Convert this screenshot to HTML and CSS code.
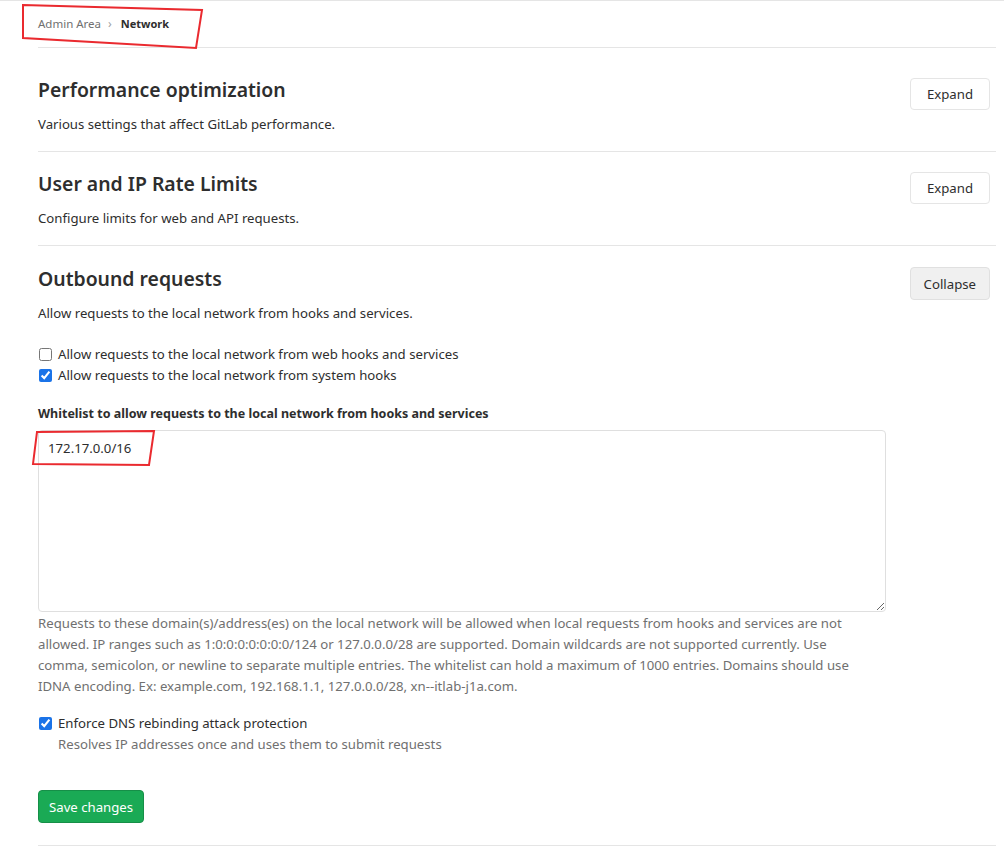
FILE: index.html
```html
<!DOCTYPE html>
<html lang="en">
<head>
<meta charset="utf-8">
<title>Network · Admin Area</title>
<link rel="stylesheet" href="styles.css">
</head>
<body>
<div class="topbar"></div>
<div class="page">
  <div class="breadcrumbs">
    <span class="crumb">Admin Area</span>
    <span class="sep">›</span>
    <span class="crumb current">Network</span>
  </div>

  <section class="settings first">
    <div class="settings-header">
      <div>
        <h4 class="settings-title">Performance optimization</h4>
        <p class="settings-desc">Various settings that affect GitLab performance.</p>
      </div>
      <button class="btn">Expand</button>
    </div>
  </section>

  <section class="settings">
    <div class="settings-header">
      <div>
        <h4 class="settings-title">User and IP Rate Limits</h4>
        <p class="settings-desc">Configure limits for web and API requests.</p>
      </div>
      <button class="btn">Expand</button>
    </div>
  </section>

  <section class="settings expanded">
    <div class="settings-header">
      <div>
        <h4 class="settings-title">Outbound requests</h4>
        <p class="settings-desc">Allow requests to the local network from hooks and services.</p>
      </div>
      <button class="btn btn-active">Collapse</button>
    </div>

    <form class="settings-form">
      <div class="checks">
        <label class="check"><input type="checkbox"> Allow requests to the local network from web hooks and services</label>
        <label class="check"><input type="checkbox" checked> Allow requests to the local network from system hooks</label>
      </div>

      <div class="field">
        <label class="field-label">Whitelist to allow requests to the local network from hooks and services</label>
        <textarea class="textarea">172.17.0.0/16</textarea>
        <p class="help">Requests to these domain(s)/address(es) on the local network will be allowed when local requests from hooks and services are not allowed. IP ranges such as 1:0:0:0:0:0:0:0/124 or 127.0.0.0/28 are supported. Domain wildcards are not supported currently. Use comma, semicolon, or newline to separate multiple entries. The whitelist can hold a maximum of 1000 entries. Domains should use IDNA encoding. Ex: example.com, 192.168.1.1, 127.0.0.0/28, xn--itlab-j1a.com.</p>
      </div>

      <div class="dns">
        <label class="check"><input type="checkbox" checked> Enforce DNS rebinding attack protection</label>
        <div class="check-help">Resolves IP addresses once and uses them to submit requests</div>
      </div>

      <button type="button" class="btn btn-success">Save changes</button>
    </form>
  </section>
</div>

<svg class="mark mark-crumb" width="190" height="50" viewBox="0 0 190 50"><polygon points="3,2 182,7 176,45 3,35" /></svg>
<svg class="mark mark-ip" width="130" height="40" viewBox="0 0 130 40"><polygon points="7,3 124,2 119,36 3,35" /></svg>
</body>
</html>
```

FILE: styles.css
```css
* { box-sizing: border-box; }
html, body { margin: 0; padding: 0; background: #fff; }
body {
  font-family: "Noto Sans", "Open Sans", "DejaVu Sans", sans-serif;
  font-size: 13.2px;
  color: #2e2e2e;
  position: relative;
}
.topbar { height: 1px; background: #e5e5e5; }
.page { margin: 0 8px 0 38px; }

.breadcrumbs {
  height: 47px;
  border-bottom: 1px solid #e5e5e5;
  display: flex;
  align-items: center;
  font-size: 11.5px;
  padding-bottom: 2px;
}
.crumb { color: #707070; }
.crumb.current { color: #2e2e2e; font-weight: 700; font-size: 11px; }
.sep { color: #a0a0a0; margin: 0 9px 0 7px; font-size: 12px; }

.settings {
  border-bottom: 1px solid #e5e5e5;
  padding: 20px 0 17px;
}
.settings.first { padding-top: 30px; }
.settings.expanded { padding-top: 21px; padding-bottom: 22px; }
.settings-header {
  display: flex;
  justify-content: space-between;
  align-items: flex-start;
  padding-right: 6px;
}
.settings-title {
  margin: 0;
  font-size: 19.4px;
  line-height: 24px;
  font-weight: 600;
}
.settings-desc { margin: 12px 0 0; line-height: 20px; }

.btn {
  font: inherit;
  font-size: 13.2px;
  color: #2e2e2e;
  background: #fff;
  border: 1px solid #e5e5e5;
  border-radius: 4px;
  height: 32px;
  padding: 0 16px;
  margin-top: 0;
  cursor: pointer;
}
.btn-active { background: #f0f0f0; border-color: #e0e0e0; height: 33px; padding: 0 13px; }
.btn-success {
  background: #1aaa55;
  border-color: #168f48;
  color: #fff;
  height: 33px;
  padding: 0 10px;
  margin-top: 0;
}

.settings-form { margin-top: 21px; }
.checks { display: flex; flex-direction: column; }
.check {
  display: flex;
  align-items: center;
  line-height: 21px;
}
.check input {
  width: 13px;
  height: 13px;
  margin: 0 6px 0 1px;
  accent-color: #1a73e8;
}
.field { margin-top: 17px; }
.field-label {
  display: block;
  font-weight: 700;
  font-size: 12.5px;
  line-height: 21px;
}
.textarea {
  display: block;
  margin-top: 6px;
  width: 848px;
  height: 182px;
  border: 1px solid #dfdfdf;
  border-radius: 4px;
  padding: 7px 9px;
  font: inherit;
  font-size: 13.2px;
  line-height: 20px;
  color: #2e2e2e;
  resize: vertical;
}
.help {
  margin: 1px 0 0;
  width: 830px;
  color: #707070;
  line-height: 21px;
}
.dns { margin-top: 16px; }
.check-help { color: #707070; line-height: 21px; padding-left: 20px; }
.dns + .btn-success { margin-top: 35px; }

.mark { position: absolute; pointer-events: none; }
.mark polygon { fill: none; stroke: #ea2a2f; stroke-width: 2; }
.mark-crumb { left: 20px; top: 3px; }
.mark-ip { left: 30px; top: 429px; }
```
